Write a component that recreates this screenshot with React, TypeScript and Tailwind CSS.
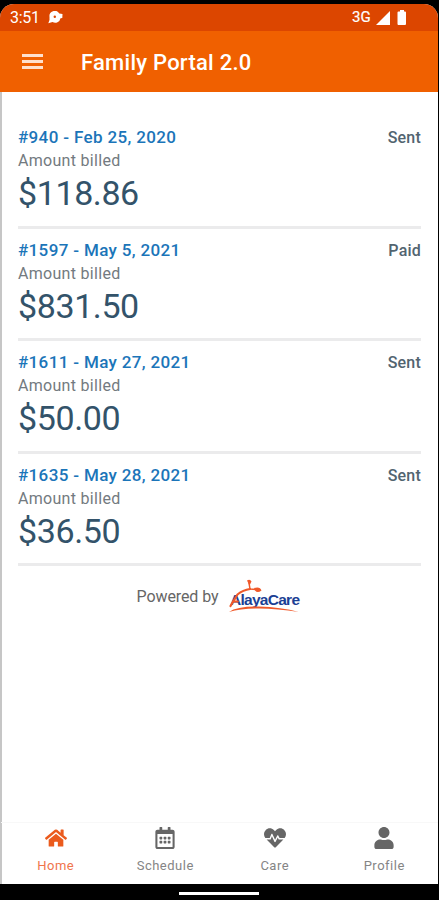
import React from "react";
import { FaHeartbeat, FaHome, FaRegCalendarAlt, FaUser } from "react-icons/fa";

interface Invoice {
  id: number;
  date: string;
  amount: string;
  status: "Sent" | "Paid";
}

const invoices: Invoice[] = [
  { id: 940, date: "Feb 25, 2020", amount: "$118.86", status: "Sent" },
  { id: 1597, date: "May 5, 2021", amount: "$831.50", status: "Paid" },
  { id: 1611, date: "May 27, 2021", amount: "$50.00", status: "Sent" },
  { id: 1635, date: "May 28, 2021", amount: "$36.50", status: "Sent" },
];

const tabs = [
  { label: "Home", icon: FaHome, active: true },
  { label: "Schedule", icon: FaRegCalendarAlt, active: false },
  { label: "Care", icon: FaHeartbeat, active: false },
  { label: "Profile", icon: FaUser, active: false },
];

function StatusBar() {
  return (
    <div className="flex h-[27px] shrink-0 items-center bg-[#dc4600] pl-2.5 pr-[31px] text-white">
      <span className="text-[16px] leading-none tracking-[-0.3px]">3:51</span>
      <svg className="ml-2 h-[13px] w-[15px]" viewBox="0 0 15 13">
        <path d="M1.500 6a5.300 5.300 0 0 1 9.800-3.500l3.200.500-.2 4-1.800.3A5.300 5.300 0 0 1 4.500 11L.3 12.300 1.500 9z" fill="#fff" />
        <circle cx="6.800" cy="5.800" r="1.200" fill="#dc4600" />
      </svg>
      <span className="ml-auto text-[15px] leading-none tracking-[0.2px] [-webkit-text-stroke:0.2px_white]">3G</span>
      <svg className="ml-[5px] h-[14px] w-[14px]" viewBox="0 0 14 14">
        <path d="M14 0v14H0z" fill="#fff" />
      </svg>
      <svg className="ml-[7px] h-[15px] w-[10px]" viewBox="0 0 10 15">
        <path d="M3 0h4v1.500h1q1 0 1 1V14q0 1-1 1H1.500q-1 0-1-1V2.500q0-1 1-1H3z" fill="#fff" />
      </svg>
    </div>
  );
}

function Header() {
  return (
    <header className="flex h-[61px] shrink-0 items-center bg-[#f06000] pl-[22px] text-white">
      <button type="button" aria-label="Menu" className="flex w-[21px] flex-col gap-[3px]">
        <span className="h-[3px] bg-[#ffe0cc]" />
        <span className="h-[3px] bg-[#ffe0cc]" />
        <span className="h-[3px] bg-[#ffe0cc]" />
      </button>
      <h1 className="ml-[38px] mt-0.5 text-[22px] font-medium leading-none tracking-[0.25px]">Family Portal 2.0</h1>
    </header>
  );
}

function InvoiceRow({ invoice }: { invoice: Invoice }) {
  return (
    <li className="h-[112.6px] border-b-[3px] border-[#ebebec] pt-[9px]">
      <div className="flex justify-between leading-[25px]">
        <span className="text-[17px] font-medium tracking-[0.35px] text-[#1b75b9]">
          #{invoice.id} - {invoice.date}
        </span>
        <span className="text-[16px] font-medium tracking-[0.2px] text-[#526470]">{invoice.status}</span>
      </div>
      <div className="text-[16px] leading-[22px] tracking-[0.3px] text-[#737a80]">Amount billed</div>
      <div className="pt-px text-[34px] leading-10 tracking-[-0.4px] text-[#33536a]">{invoice.amount}</div>
    </li>
  );
}

function AlayaCareLogo() {
  return (
    <svg className="h-9 w-[74px] overflow-visible" viewBox="0 0 74 36">
      <text
        x="2"
        y="26"
        textLength="70"
        className="font-['Liberation_Sans',sans-serif]"
        fontSize="15.500"
        fontWeight="700"
        fill="#1c3f94"
      >
        AlayaCare
      </text>
      <g fill="none" stroke="#f0592a" strokeLinecap="round">
        <path d="M2.500 27 9.500 15.500Q15 11 22 10" strokeWidth="2.200" />
        <path d="M22 10 21 4M22 10l7 .5" strokeWidth="1.500" />
        <path d="M5 22.500h5" strokeWidth="1.800" />
      </g>
      <path d="M19 1.500q3-2 4.500 1l-2 4zM26 9q6-2 7.500 2.500-4 3-6.500 0z" fill="#f0592a" />
      <path d="M1 33q8-6 30-5.500 22 .5 40 5.500-22-3.500-40-3.500-18 0-30 3.500z" fill="#f0592a" />
    </svg>
  );
}

function TabBar() {
  return (
    <nav className="-ml-px -mr-px grid h-[62px] shrink-0 grid-cols-4 border-t border-[#f8f8f8]">
      {tabs.map(({ label, icon: Icon, active }) => (
        <button
          key={label}
          type="button"
          className={`flex flex-col items-center pt-1 ${active ? "text-[#eb5b1d]" : "text-[#666]"}`}
        >
          <Icon className="h-[22px] w-[22px]" />
          <span className={`mt-[7px] text-[13px] leading-5 tracking-[0.5px] ${active ? "text-[#f0754c]" : "text-[#858585]"}`}>
            {label}
          </span>
        </button>
      ))}
    </nav>
  );
}

export default function App() {
  return (
    <div className="flex h-[900px] w-[439px] flex-col bg-black pt-1 font-['Roboto',sans-serif]">
      <div className="mr-px flex min-h-0 flex-1 flex-col overflow-hidden rounded-t-[14px] bg-white">
        <StatusBar />
        <Header />
        <div className="flex flex-1 flex-col border-l-2 border-[#c6c6c6]">
          <main className="flex-1 pl-4 pr-[17px] pt-6">
            <ul>
              {invoices.map((invoice) => (
                <InvoiceRow key={invoice.id} invoice={invoice} />
              ))}
            </ul>
            <div className="flex items-start justify-center pt-[13px]">
              <span className="mr-2.5 mt-1.5 text-[16px] leading-6 tracking-[-0.1px] text-[#666]">Powered by</span>
              <AlayaCareLogo />
            </div>
          </main>
          <TabBar />
        </div>
      </div>
      {/* System gesture bar */}
      <div className="flex h-4 shrink-0 justify-center pr-px pt-2">
        <div className="h-[3px] w-20 bg-white" />
      </div>
    </div>
  );
}
